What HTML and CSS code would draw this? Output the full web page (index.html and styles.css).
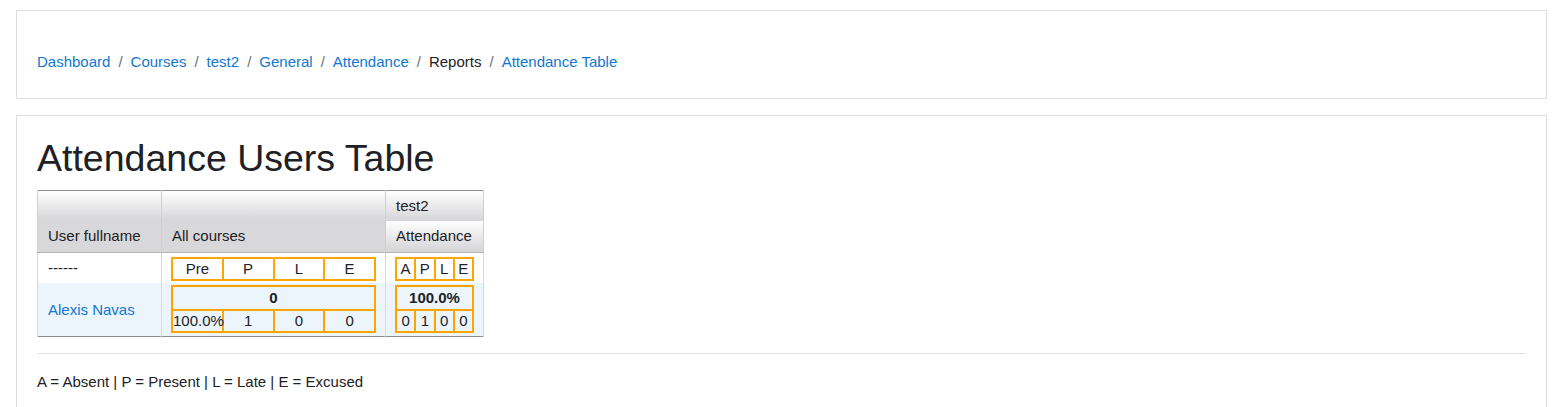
FILE: index.html
```html
<!DOCTYPE html>
<html>
<head>
<meta charset="utf-8">
<title>Attendance Users Table</title>
<link rel="stylesheet" href="styles.css">
</head>
<body>
<div class="page">
  <header class="card header-card">
    <nav class="breadcrumb">
      <a href="#">Dashboard</a><span class="sep">/</span>
      <a href="#">Courses</a><span class="sep">/</span>
      <a href="#">test2</a><span class="sep">/</span>
      <a href="#">General</a><span class="sep">/</span>
      <a href="#">Attendance</a><span class="sep">/</span>
      <span class="current">Reports</span><span class="sep">/</span>
      <a href="#">Attendance Table</a>
    </nav>
  </header>
  <main class="card main-card">
    <h1 class="title">Attendance Users Table</h1>
    <table class="report">
      <thead>
        <tr>
          <th rowspan="2" class="col-user">User fullname</th>
          <th rowspan="2" class="col-all">All courses</th>
          <th class="col-course">test2</th>
        </tr>
        <tr>
          <th class="col-course">Attendance</th>
        </tr>
      </thead>
      <tbody>
        <tr class="row-head">
          <td class="cell-user">------</td>
          <td class="cell-box">
            <table class="boxes wide">
              <tr><td>Pre</td><td>P</td><td>L</td><td>E</td></tr>
            </table>
          </td>
          <td class="cell-box">
            <table class="boxes narrow">
              <tr><td>A</td><td>P</td><td>L</td><td>E</td></tr>
            </table>
          </td>
        </tr>
        <tr class="row-user">
          <td class="cell-user"><a href="#">Alexis Navas</a></td>
          <td class="cell-box">
            <table class="boxes wide">
              <tr><td colspan="4" class="total">0</td></tr>
              <tr class="nums"><td class="pct">100.0%</td><td>1</td><td>0</td><td>0</td></tr>
            </table>
          </td>
          <td class="cell-box">
            <table class="boxes narrow">
              <tr><td colspan="4" class="total">100.0%</td></tr>
              <tr class="nums"><td>0</td><td>1</td><td>0</td><td>0</td></tr>
            </table>
          </td>
        </tr>
      </tbody>
    </table>
    <hr class="rule">
    <p class="legend">A = Absent | P = Present | L = Late | E = Excused</p>
  </main>
</div>
</body>
</html>
```
FILE: styles.css
```css
html, body {
  margin: 0;
  padding: 0;
  background: #fff;
}
body {
  font-family: "Liberation Sans", Arial, sans-serif;
  font-size: 15px;
  line-height: 1.5;
  color: #1d2125;
}
a {
  color: #1177d1;
  text-decoration: none;
}
.page {
  padding: 10px 14px 0 16px;
  display: flex;
  flex-direction: column;
  gap: 16px;
}
.card {
  border: 1px solid #dedede;
  background: #fff;
}
.header-card {
  padding: 40px 20px 24px;
}
.breadcrumb {
  display: flex;
  align-items: center;
  white-space: nowrap;
}
.breadcrumb .sep {
  color: #6a737b;
  padding: 0 8px;
}
.breadcrumb .current {
  color: #1d2125;
}
.main-card {
  padding: 20px 20px 30px;
}
.title {
  margin: 0 0 9px;
  font-size: 37.5px;
  font-weight: 400;
  line-height: 1.2;
  color: #1d2125;
}
.report {
  border-collapse: collapse;
  border: 1px solid #8c8c8c;
  color: #1d2125;
}
.report th {
  font-weight: 400;
  text-align: left;
  vertical-align: bottom;
  padding: 4px 10px;
  height: 22px;
  background-color: #d8d8da;
  background-image: linear-gradient(#ffffff, #d8d8da);
  background-size: 100% 28px;
  background-repeat: no-repeat;
  border-left: 1px solid #d0d0d0;
  border-right: 1px solid #d0d0d0;
  border-bottom: 1px solid #b5b5b5;
}
.report th.col-course {
  border-bottom: 0;
}
.report tr:nth-child(2) th.col-course {
  border-bottom: 1px solid #b5b5b5;
}
.col-user { width: 103px; }
.col-all { width: 203px; }
.col-course { width: 77px; }
.report > tbody > tr > td {
  border-left: 1px solid #d8d8d8;
  border-right: 1px solid #d8d8d8;
  vertical-align: middle;
}
.cell-user {
  padding: 2px 10px;
  text-align: left;
}
.cell-box {
  padding: 2px 9px;
}
.row-head > td {
  padding-top: 4px;
  padding-bottom: 2px;
}
.row-user > td {
  background: #ecf4fc;
  padding-top: 2px;
  padding-bottom: 3px;
}
.row-user > td.cell-user {
  padding-top: 5px;
}
.boxes {
  border-collapse: collapse;
  table-layout: fixed;
}
.boxes.wide { width: 205px; }
.boxes.narrow { width: 79px; }
.boxes td {
  border: 2px solid #ffa500;
  text-align: center;
  padding: 0;
  line-height: 20px;
  white-space: nowrap;
  overflow: visible;
}
.boxes .nums td {
  line-height: 20px;
}
.boxes td.total {
  font-weight: 700;
  line-height: 22px;
}
.boxes td.pct {
  text-align: left;
}
.rule {
  border: 0;
  border-top: 1px solid #e3e3e3;
  margin: 16px 0 0;
}
.legend {
  margin: 17px 0 0;
}
```
